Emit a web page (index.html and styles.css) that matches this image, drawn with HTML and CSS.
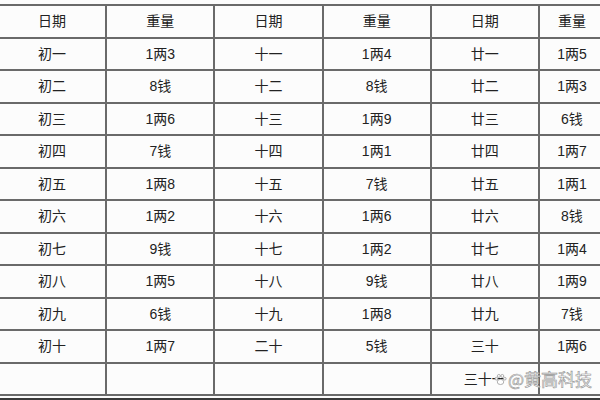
FILE: index.html
```html
<!DOCTYPE html>
<html lang="zh">
<head>
<meta charset="utf-8">
<link rel="stylesheet" href="styles.css">
</head>
<body>
<div class="page">
  <table class="weights">
    <colgroup>
      <col class="c-wide"><col class="c-wide"><col class="c-wide"><col class="c-wide"><col class="c-wide"><col class="c-last">
    </colgroup>
    <thead>
      <tr><th>日期</th><th>重量</th><th>日期</th><th>重量</th><th>日期</th><th>重量</th></tr>
    </thead>
    <tbody>
      <tr><td>初一</td><td>1两3</td><td>十一</td><td>1两4</td><td>廿一</td><td>1两5</td></tr>
      <tr><td>初二</td><td>8钱</td><td>十二</td><td>8钱</td><td>廿二</td><td>1两3</td></tr>
      <tr><td>初三</td><td>1两6</td><td>十三</td><td>1两9</td><td>廿三</td><td>6钱</td></tr>
      <tr><td>初四</td><td>7钱</td><td>十四</td><td>1两1</td><td>廿四</td><td>1两7</td></tr>
      <tr><td>初五</td><td>1两8</td><td>十五</td><td>7钱</td><td>廿五</td><td>1两1</td></tr>
      <tr><td>初六</td><td>1两2</td><td>十六</td><td>1两6</td><td>廿六</td><td>8钱</td></tr>
      <tr><td>初七</td><td>9钱</td><td>十七</td><td>1两2</td><td>廿七</td><td>1两4</td></tr>
      <tr><td>初八</td><td>1两5</td><td>十八</td><td>9钱</td><td>廿八</td><td>1两9</td></tr>
      <tr><td>初九</td><td>6钱</td><td>十九</td><td>1两8</td><td>廿九</td><td>7钱</td></tr>
      <tr><td>初十</td><td>1两7</td><td>二十</td><td>5钱</td><td>三十</td><td>1两6</td></tr>
      <tr><td></td><td></td><td></td><td></td><td>三十一</td><td></td></tr>
    </tbody>
  </table>
  <div class="next-edge"></div>
  <div class="watermark">
    <svg class="paw" viewBox="0 0 16 16" width="13" height="13">
      <g fill="#fff" stroke="#9a9a9a" stroke-width="1">
        <ellipse cx="8" cy="11" rx="4" ry="3.2"/>
        <circle cx="3" cy="7" r="1.7"/>
        <circle cx="6" cy="3.6" r="1.8"/>
        <circle cx="10.2" cy="3.6" r="1.8"/>
        <circle cx="13.2" cy="7" r="1.7"/>
      </g>
    </svg>
    <span class="wm-text">@黄高科技</span>
  </div>
</div>
</body>
</html>
```

FILE: styles.css
```css
html, body {
  margin: 0;
  padding: 0;
  background: #fcfcfc;
}

.page {
  position: relative;
  width: 600px;
  height: 400px;
  overflow: hidden;
  padding-top: 4px;
  box-sizing: border-box;
}

.weights {
  border-collapse: collapse;
  table-layout: fixed;
  width: 607px;
  margin-left: -3px;
  font-family: "Liberation Sans", "Noto Sans CJK SC", sans-serif;
  font-size: 14px;
  color: #222;
}

.c-wide {
  width: 108.2px;
}

.c-last {
  width: 66px;
}

.weights th,
.weights td {
  border: 2px solid #6a6a6a;
  height: 30.5px;
  padding: 0;
  text-align: center;
  vertical-align: middle;
  font-weight: normal;
  line-height: 16px;
  white-space: nowrap;
}

.next-edge {
  margin-top: 2px;
  height: 3px;
  background: #3a3a3a;
}

.watermark {
  position: absolute;
  left: 494px;
  top: 369px;
  display: flex;
  align-items: center;
  gap: 1px;
  font-family: "Noto Sans CJK SC", "Liberation Sans", sans-serif;
  font-size: 17px;
  line-height: 20px;
  color: #fdfdfd;
  -webkit-text-stroke: 0.6px #8f8f8f;
  opacity: 0.95;
}

.paw {
  display: block;
}
```
